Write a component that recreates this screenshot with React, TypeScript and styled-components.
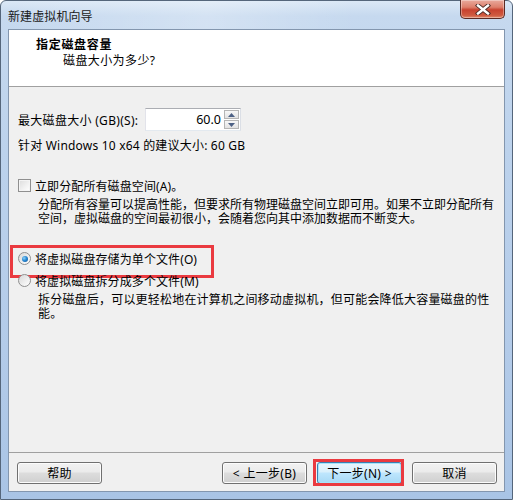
import React from 'react';
import styled, { createGlobalStyle } from 'styled-components';

const Global = createGlobalStyle`
  html, body { margin: 0; padding: 0; background: #fff; }
  body {
    width: 513px; height: 500px; overflow: hidden;
    font-family: "Noto Sans", "Noto Sans CJK SC", sans-serif;
    font-size: 12px; color: #000;
  }
  * { box-sizing: border-box; }
`;

const Window = styled.div`
  width: 513px;
  height: 500px;
  border: 1px solid #55667b;
  border-radius: 6px 6px 0 0;
  background: linear-gradient(180deg, #dbe8f6 0%, #c6d9ef 3%, #bcd2ec 30%, #b3cbe9 70%, #a9c4e5 100%);
  padding: 0 7px 7px 7px;
  display: flex;
  flex-direction: column;
`;

const TitleBar = styled.div`
  height: 28px;
  display: flex;
  justify-content: space-between;
  align-items: flex-start;
  background: linear-gradient(90deg, rgba(255,255,255,0.0) 0%, rgba(255,255,255,0.25) 40%, rgba(255,255,255,0.0) 70%);
`;

const TitleText = styled.span`
  align-self: center;
  margin-top: 3px;
  font-size: 12px;
  line-height: 14px;
  color: #1a1a1a;
  letter-spacing: 0.1px;
`;

const CloseButton = styled.div`
  width: 45px;
  height: 19px;
  margin-top: -1px;
  border: 1px solid #5b2a24;
  border-top: none;
  border-radius: 0 0 5px 5px;
  background: linear-gradient(180deg, #e9aa9d 0%, #dd7f6c 40%, #c8422f 55%, #cf5a40 85%, #e08a6c 100%);
  box-shadow: inset 0 0 0 1px rgba(255,255,255,0.35);
  display: flex;
  align-items: center;
  justify-content: center;
`;

const Client = styled.div`
  flex: 1;
  border: 1px solid #8396ae;
  background: #f0f0f0;
  display: flex;
  flex-direction: column;
`;

const Header = styled.div`
  height: 57px;
  background: #fff;
  border-bottom: 1px solid #a0a0a0;
  padding: 7px 0 0 27px;
  display: flex;
  flex-direction: column;
`;

const HeaderTitle = styled.div`
  font-weight: bold;
  font-size: 12px;
  line-height: 16px;
  letter-spacing: 0.7px;
`;

const HeaderSub = styled.div`
  padding-left: 27px;
  line-height: 15px;
  letter-spacing: 0.4px;
`;

const Body = styled.div`
  flex: 1;
  padding: 0 0 0 9px;
  display: flex;
  flex-direction: column;
`;

const SizeRow = styled.div`
  margin-top: 21px;
  height: 23px;
  display: flex;
  align-items: center;
`;

const SizeLabel = styled.label`
  width: 127px;
  letter-spacing: 0.3px;
`;

const SpinBox = styled.div`
  width: 96px;
  height: 23px;
  background: #fff;
  border: 1px solid #abadb3;
  border-color: #abadb3 #dbdfe6 #e3e9ef #e2e3ea;
  display: flex;
  align-items: stretch;
`;

const SpinValue = styled.div`
  flex: 1;
  text-align: right;
  padding-right: 3px;
  line-height: 21px;
  font-size: 12.5px;
`;

const SpinButtons = styled.div`
  width: 16px;
  display: flex;
  flex-direction: column;
  gap: 1px;
  padding: 1px 1px 1px 0;
`;

const SpinBtn = styled.div`
  flex: 1;
  border: 1px solid #b5b5b5;
  background: linear-gradient(180deg, #f8f8f8, #e2e2e2);
  display: flex;
  align-items: center;
  justify-content: center;
`;

const Text = styled.div<{ $mt: number }>`
  margin-top: ${p => p.$mt}px;
  line-height: 15px;
  letter-spacing: 0.2px;
  white-space: nowrap;
`;

const Description = styled.div<{ $mt: number; $ls: number }>`
  margin-top: ${p => p.$mt}px;
  padding-left: 20px;
  font-family: "Liberation Sans", "Noto Sans CJK SC", sans-serif;
  line-height: 13.5px;
  letter-spacing: ${p => p.$ls}px;
  white-space: nowrap;
`;

const OptionRow = styled.div<{ $mt: number; $marked?: boolean }>`
  position: relative;
  margin-top: ${p => p.$mt}px;
  height: 15px;
  display: flex;
  align-items: center;
  gap: 4px;
  letter-spacing: 0.1px;
  ${p => p.$marked ? `
    &::after {
      content: '';
      position: absolute;
      left: -8px;
      top: -6px;
      width: 198px;
      height: 27px;
      border: 3px solid #ea3a40;
      pointer-events: none;
    }
  ` : ''}
`;

const CheckBox = styled.span`
  width: 13px;
  height: 13px;
  border: 1px solid #8f8f8f;
  background: linear-gradient(135deg, #dcdcdc 0%, #f2f2f2 60%, #ffffff 100%);
  box-shadow: inset 0 0 0 1px #f4f4f4;
  flex: none;
`;

const Radio = styled.span<{ $checked?: boolean }>`
  width: 13px;
  height: 13px;
  border-radius: 50%;
  border: 1px solid #8f8f8f;
  background: linear-gradient(135deg, #d8d8d8 0%, #f0f0f0 60%, #ffffff 100%);
  display: flex;
  align-items: center;
  justify-content: center;
  flex: none;
  &::after {
    content: '';
    display: ${p => (p.$checked ? 'block' : 'none')};
    width: 6px;
    height: 6px;
    border-radius: 50%;
    background: radial-gradient(circle at 35% 35%, #8fd2f8 0%, #2a8ad4 45%, #0d4f94 100%);
  }
`;

const Footer = styled.div`
  border-top: 1px solid #a0a0a0;
  padding: 9px 7px 7px 8px;
  display: flex;
  align-items: center;
`;

const Spacer = styled.div`
  flex: 1;
`;

const ButtonWrap = styled.div<{ $marked?: boolean }>`
  position: relative;
  margin-left: ${p => (p.$marked ? 10 : 0)}px;
  margin-right: ${p => (p.$marked ? 10 : 0)}px;
  ${p => p.$marked ? `
    &::after {
      content: '';
      position: absolute;
      left: -4px;
      top: -3px;
      right: -2px;
      bottom: -2px;
      border: 3px solid #ea3a40;
      pointer-events: none;
    }
  ` : ''}
`;

const Button = styled.button<{ $default?: boolean }>`
  width: 85px;
  height: 22px;
  padding: 0;
  font-family: "Noto Sans", "Noto Sans CJK SC", sans-serif;
  font-size: 12px;
  letter-spacing: 0.3px;
  color: #000;
  border-radius: 3px;
  border: 1px solid ${p => (p.$default ? '#3c7fb1' : '#707070')};
  background: ${p =>
    p.$default
      ? 'linear-gradient(180deg, #eaf6fd 0%, #d9f0fc 45%, #bee6fd 50%, #a7d9f5 100%)'
      : 'linear-gradient(180deg, #f2f2f2 0%, #ebebeb 45%, #dddddd 50%, #cfcfcf 100%)'};
  box-shadow: inset 0 0 0 1px ${p => (p.$default ? '#a6e4fb' : '#fcfcfc')};
  display: flex;
  align-items: center;
  justify-content: center;
`;

const CloseIcon = () => (
  <svg width="16" height="11" viewBox="0 0 16 11">
    <path d="M3 1.5 L13 9.5 M13 1.5 L3 9.5" stroke="#4a2a25" strokeWidth="4.2" strokeLinecap="square" />
    <path d="M3 1.5 L13 9.5 M13 1.5 L3 9.5" stroke="#ffffff" strokeWidth="2.4" strokeLinecap="square" />
  </svg>
);

const Arrow = ({ up }: { up?: boolean }) => (
  <svg width="7" height="4" viewBox="0 0 7 4">
    <path d={up ? 'M0 4 L3.5 0 L7 4 Z' : 'M0 0 L3.5 4 L7 0 Z'} fill="#4d6185" />
  </svg>
);

export default function App() {
  return (
    <>
      <Global />
      <Window>
        <TitleBar>
          <TitleText>新建虚拟机向导</TitleText>
          <CloseButton>
            <CloseIcon />
          </CloseButton>
        </TitleBar>
        <Client>
          <Header>
            <HeaderTitle>指定磁盘容量</HeaderTitle>
            <HeaderSub>磁盘大小为多少?</HeaderSub>
          </Header>
          <Body>
            <SizeRow>
              <SizeLabel>最大磁盘大小 (GB)(S):</SizeLabel>
              <SpinBox>
                <SpinValue>60.0</SpinValue>
                <SpinButtons>
                  <SpinBtn><Arrow up /></SpinBtn>
                  <SpinBtn><Arrow /></SpinBtn>
                </SpinButtons>
              </SpinBox>
            </SizeRow>
            <Text $mt={7}>针对 Windows 10 x64 的建议大小: 60 GB</Text>
            <OptionRow $mt={25}>
              <CheckBox />
              <span>立即分配所有磁盘空间(A)。</span>
            </OptionRow>
            <Description $mt={6} $ls={0}>
              分配所有容量可以提高性能，但要求所有物理磁盘空间立即可用。如果不立即分配所有
              <br />
              空间，虚拟磁盘的空间最初很小，会随着您向其中添加数据而不断变大。
            </Description>
            <OptionRow $mt={25} $marked>
              <Radio $checked />
              <span>将虚拟磁盘存储为单个文件(O)</span>
            </OptionRow>
            <OptionRow $mt={7}>
              <Radio />
              <span>将虚拟磁盘拆分成多个文件(M)</span>
            </OptionRow>
            <Description $mt={6} $ls={0.2}>
              拆分磁盘后，可以更轻松地在计算机之间移动虚拟机，但可能会降低大容量磁盘的性
              <br />
              能。
            </Description>
          </Body>
          <Footer>
            <Button>帮助</Button>
            <Spacer />
            <Button>&lt; 上一步(B)</Button>
            <ButtonWrap $marked>
              <Button $default>下一步(N) &gt;</Button>
            </ButtonWrap>
            <Button>取消</Button>
          </Footer>
        </Client>
      </Window>
    </>
  );
}
